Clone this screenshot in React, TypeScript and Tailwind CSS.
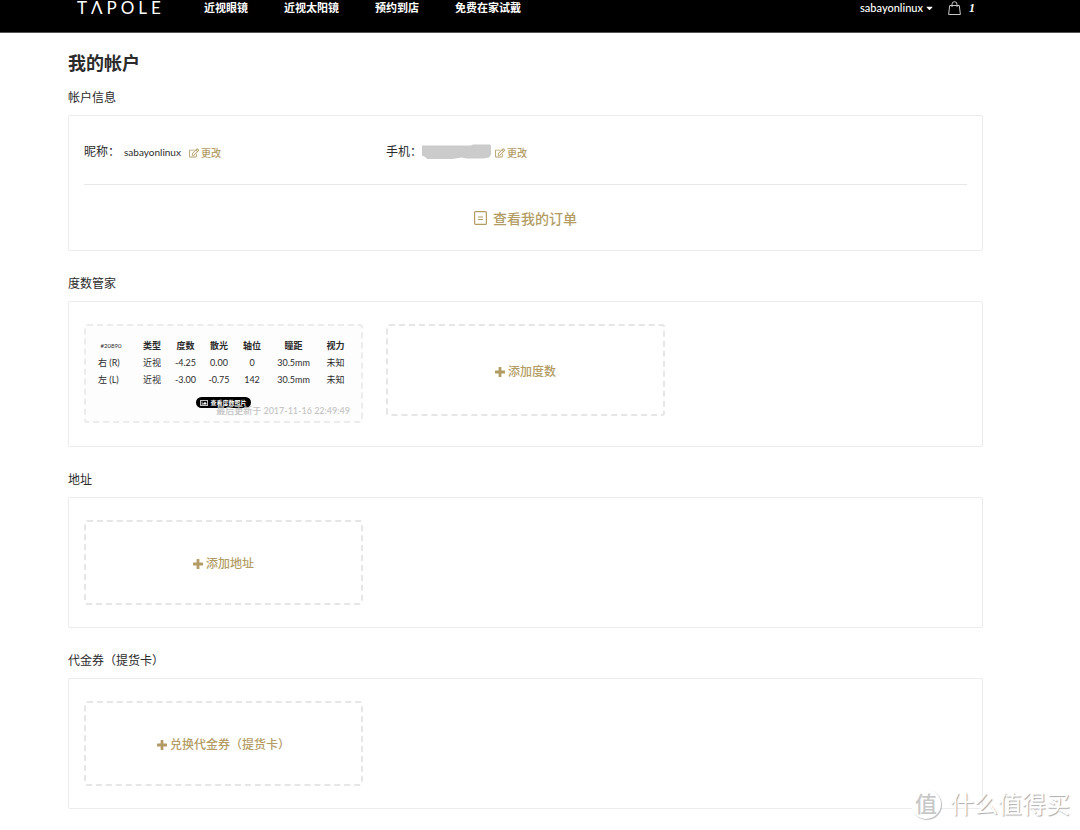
import React from 'react';
import { FaCaretDown, FaRegEdit, FaRegImage } from 'react-icons/fa';

const navItems = ['近视眼镜', '近视太阳镜', '预约到店', '免费在家试戴'];

const columns = [
  { name: '#20890', width: 'w-[46px]' },
  { name: '类型', width: 'w-[36px]' },
  { name: '度数', width: 'w-[31px]' },
  { name: '散光', width: 'w-[36px]' },
  { name: '轴位', width: 'w-[30px]' },
  { name: '瞳距', width: 'w-[53px]' },
  { name: '视力', width: 'w-[31px]' },
];

const eyes = [
  { side: '右 (R)', values: ['近视', '-4.25', '0.00', '0', '30.5mm', '未知'] },
  { side: '左 (L)', values: ['近视', '-3.00', '-0.75', '142', '30.5mm', '未知'] },
];

function BagIcon() {
  return (
    <svg className="w-[13px] h-[14px]" viewBox="0 0 13 14" fill="none" stroke="#c8c8c8" aria-hidden="true">
      <path d="M1.7 4.5h9.6l1.1 9H.6z" />
      <path d="M4 6V3.2a2.5 2.5 0 0 1 5 0V6" />
    </svg>
  );
}

function OrderIcon() {
  return (
    <svg className="w-[13px] h-[14px]" viewBox="0 0 13 14" fill="none" stroke="currentColor" aria-hidden="true">
      <rect x="0.6" y="0.6" width="11.8" height="12.8" rx="1" strokeWidth="1.2" />
      <path d="M4 6h5M4 8.5h5" />
    </svg>
  );
}

function PlusIcon() {
  return (
    <svg className="w-[10px] h-[10px]" viewBox="0 0 10 10" fill="currentColor" aria-hidden="true">
      <path d="M4.1 0h1.8a.5.5 0 0 1 .5.5v3.1h3.1a.5.5 0 0 1 .5.5v1.8a.5.5 0 0 1-.5.5H6.4v3.1a.5.5 0 0 1-.5.5H4.1a.5.5 0 0 1-.5-.5V6.4H.5a.5.5 0 0 1-.5-.5V4.1a.5.5 0 0 1 .5-.5h3.1V.5a.5.5 0 0 1 .5-.5z" />
    </svg>
  );
}

function Header() {
  return (
    <header className="bg-black text-white border-b border-[#555] pl-[77px] pr-[105px] pb-[16px]">
      <div className="flex items-center h-[16px] text-[11px]">
        <a href="#home" aria-label="TAPOLE" className="w-[127px] text-[17px] leading-[16px] tracking-[4px]">
          TΛPOLE
        </a>
        <nav className="flex gap-[36px] font-bold">
          {navItems.map((item) => (
            <a key={item} href="#shop">
              {item}
            </a>
          ))}
        </nav>
        <div className="ml-auto flex items-center">
          <button type="button" className="flex items-center gap-[2px] font-medium">
            sabayonlinux
            <FaCaretDown className="w-[9px] h-[10px]" />
          </button>
          <a href="#cart" className="ml-[14px] flex items-center gap-[8px]">
            <BagIcon />
            <span className="font-['Liberation_Serif',serif] text-[12px] font-bold italic">1</span>
          </a>
        </div>
      </div>
    </header>
  );
}

function Section({ title, children }: { title: string; children: React.ReactNode }) {
  return (
    <section className="mb-6">
      <h2 className="mb-2 text-[12px] leading-[18px]">{title}</h2>
      <div className="border border-[#ececec] rounded-[2px] px-[15px] py-[22px]">{children}</div>
    </section>
  );
}

function EditLink() {
  return (
    <a href="#edit" className="flex items-center gap-[2px] pt-[2px] text-[10px] font-medium text-[#b39c64]">
      <FaRegEdit className="w-[10px] h-[10px]" />
      更改
    </a>
  );
}

function AddButton({ label, height }: { label: string; height: string }) {
  return (
    <button
      type="button"
      className={`flex items-center justify-center gap-[3px] pt-[3px] border-2 border-dashed border-[#e6e6e6] rounded-[3px] text-[12px] font-medium text-[#b39c64] ${height}`}
    >
      <PlusIcon />
      {label}
    </button>
  );
}

function DegreeCard() {
  return (
    <div className="relative h-[99px] border-2 border-dashed border-[#ececec] rounded-[3px] bg-[#fdfdfd] pt-[10px] pl-[2px] pr-[11px]">
      <table className="w-full table-fixed text-center text-[9px] leading-[17px]">
        <thead>
          <tr>
            {columns.map((column, i) => (
              <th key={column.name} scope="col" className={`${column.width} ${i === 0 ? 'text-[6px] font-normal' : 'font-bold'} h-[18px] p-0`}>
                {column.name}
              </th>
            ))}
          </tr>
        </thead>
        <tbody>
          {eyes.map((eye) => (
            <tr key={eye.side}>
              <th scope="row" className="h-[17px] p-0 pl-[10px] text-left font-normal whitespace-nowrap">
                {eye.side}
              </th>
              {eye.values.map((value, i) => (
                <td key={i} className="p-0 whitespace-nowrap">
                  {value}
                </td>
              ))}
            </tr>
          ))}
        </tbody>
      </table>
      <button
        type="button"
        className="mt-[9px] ml-[108px] flex h-[11px] w-[55px] items-center justify-center gap-[2px] rounded-full bg-black text-[6px] font-bold whitespace-nowrap text-white"
      >
        <FaRegImage className="w-[8px] h-[8px]" />
        查看度数照片
      </button>
      <p className="absolute right-[11px] bottom-[4px] text-[9px] leading-[12px] font-medium text-[#c4c4c4]">
        最后更新于 2017-11-16 22:49:49
      </p>
    </div>
  );
}

function Watermark() {
  return (
    <div className="absolute right-[10px] bottom-[10px] flex items-center gap-[9px] text-[24px] leading-[32px] text-white [text-shadow:1px_1px_1px_#aaa]">
      <span className="flex h-[30px] w-[30px] items-center justify-center rounded-full bg-white shadow-[1px_1px_1px_#bbb]">
        <span className="text-[22px] text-[#c8c8c8] [text-shadow:none] font-medium">值</span>
      </span>
      <span>什么值得买</span>
    </div>
  );
}

export default function App() {
  return (
    <div lang="zh-CN" className="relative min-h-screen bg-white font-['Lato','Noto_Sans_CJK_SC',sans-serif] text-[#2b2b2b]">
      <Header />
      <main className="pl-[68px] pr-[97px] pt-[18px]">
        <h1 className="mb-[14px] text-[18px] leading-[24px] font-bold">我的帐户</h1>

        <Section title="帐户信息">
          <div className="grid grid-cols-3 gap-x-[23px] border-b border-[#e8e8e8] pt-[4px] pb-[22px]">
            <div className="flex h-[20px] items-center text-[12px]">
              <span>昵称：</span>
              <span className="ml-[4px] mr-[8px] pt-[1px] text-[10px]">sabayonlinux</span>
              <EditLink />
            </div>
            <div className="flex h-[20px] items-center text-[12px]">
              <span>手机：</span>
              <svg className="mr-[4px] h-[16px] w-[69px]" viewBox="0 0 69 16" fill="#cbcbcb" aria-hidden="true">
                <path d="M0 1.5h49l2-1h17l1 1v9l-2 3-6 1H44l-4-1-10 1.5H5l-1-1.5-4-2z" />
              </svg>
              <EditLink />
            </div>
          </div>
          <div className="flex justify-center pt-[23px]">
            <a href="#orders" className="flex h-[20px] items-center gap-[6px] text-[14px] font-medium text-[#b39c64]">
              <OrderIcon />
              查看我的订单
            </a>
          </div>
        </Section>

        <Section title="度数管家">
          <div className="grid grid-cols-3 items-start gap-x-[23px] pb-px">
            <DegreeCard />
            <AddButton label="添加度数" height="h-[92px]" />
          </div>
        </Section>

        <Section title="地址">
          <div className="grid grid-cols-3 gap-x-[23px]">
            <AddButton label="添加地址" height="h-[85px]" />
          </div>
        </Section>

        <Section title="代金券（提货卡）">
          <div className="grid grid-cols-3 gap-x-[23px]">
            <AddButton label="兑换代金券（提货卡）" height="h-[85px]" />
          </div>
        </Section>
      </main>
      <Watermark />
    </div>
  );
}
